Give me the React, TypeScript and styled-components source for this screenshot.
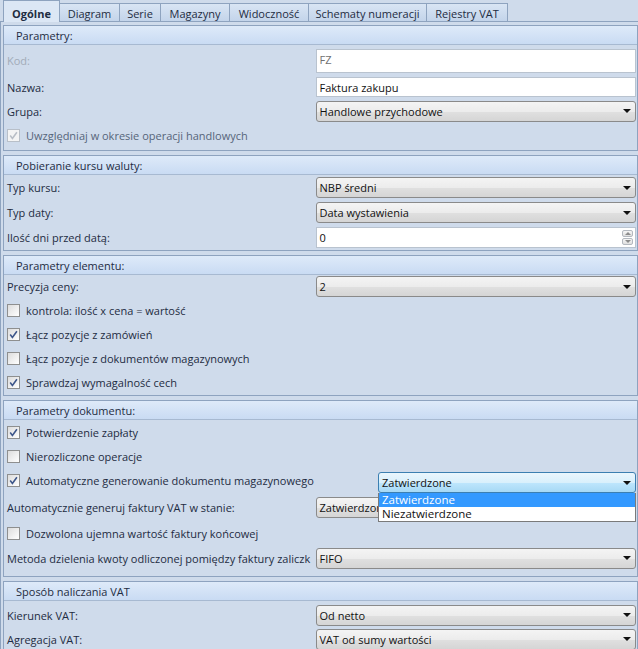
import React from "react";
import styled, { createGlobalStyle, css } from "styled-components";

const GlobalStyle = createGlobalStyle`
  html, body { margin: 0; padding: 0; background: #cfdbeb; }
  body {
    font-family: "Open Sans", "Noto Sans", sans-serif;
    font-size: 11px;
    color: #1e2c42;
  }
  * { box-sizing: border-box; }
`;

const Page = styled.div`
  width: 638px;
  height: 649px;
  overflow: hidden;
  background: #cfdbeb;
`;

const TabStrip = styled.div`
  display: flex;
  align-items: flex-end;
  height: 22px;
  padding-left: 3px;
  border-bottom: 1px solid #8ea3bf;
`;

const Tab = styled.div<{ $active?: boolean; $w: number }>`
  width: ${(p) => p.$w}px;
  height: 18px;
  margin-left: -1px;
  padding-top: 1px;
  border: 1px solid #8ea3bf;
  border-bottom: none;
  display: flex;
  align-items: center;
  justify-content: center;
  white-space: nowrap;
  background: linear-gradient(#d9e5f4, #c3d4ea);
  color: #1e2c42;
  ${(p) =>
    p.$active &&
    css`
      height: 22px;
      margin-bottom: -1px;
      padding-top: 3px;
      margin-left: 0;
      background: #dce7f5;
      font-weight: 700;
      position: relative;
      z-index: 1;
    `}
`;

const Panel = styled.div`
  padding-left: 2px;
  border-left: 1px solid #8ea3bf;
  padding-top: 2px;
`;

const Group = styled.section<{ $pb?: number; $gap?: number }>`
  margin-top: ${(p) => p.$gap ?? 4}px;
  width: 635px;
  border: 1px solid #8ea3bf;
  padding-bottom: ${(p) => p.$pb ?? 0}px;
`;

const GroupHeader = styled.div`
  height: 19px;
  padding-left: 12px;
  display: flex;
  align-items: center;
  border-bottom: 1px solid #a7b9d1;
  background: linear-gradient(#deeaf9, #c9dbf3);
  color: #1e2c42;
`;

const Body = styled.div<{ $pt?: number }>`
  padding-top: ${(p) => p.$pt ?? 0}px;
`;

const Row = styled.div<{ $h?: number }>`
  display: flex;
  align-items: center;
  height: ${(p) => p.$h ?? 24}px;
`;

const Label = styled.div<{ $muted?: boolean }>`
  width: 309px;
  margin-right: 3px;
  padding-left: 3px;
  white-space: nowrap;
  overflow: hidden;
  text-overflow: clip;
  color: ${(p) => (p.$muted ? "#a2abb8" : "#1e2c42")};
`;

const Field = styled.div<{ $w?: number; $end?: boolean }>`
  width: ${(p) => p.$w ?? 321}px;
  margin-left: auto;
  margin-right: 1px;
  align-self: ${(p) => (p.$end ? "flex-end" : "center")};
  position: relative;
`;

const TextBox = styled.div<{ $h?: number; $grey?: boolean }>`
  height: ${(p) => p.$h ?? 20}px;
  background: #fff;
  border: 1px solid #b9c3cf;
  padding: 0 3px;
  display: flex;
  align-items: ${(p) => (p.$h && p.$h > 21 ? "flex-start" : "center")};
  padding-top: ${(p) => (p.$h && p.$h > 21 ? 2 : 0)}px;
  color: ${(p) => (p.$grey ? "#707070" : "#111")};
  position: relative;
`;

const ComboBox = styled.div<{ $focus?: boolean }>`
  height: 21px;
  border: 1px solid #8a8a8a;
  border-radius: 3px;
  padding: 0 3px;
  display: flex;
  align-items: center;
  justify-content: space-between;
  color: #111;
  white-space: nowrap;
  overflow: hidden;
  background: linear-gradient(#f4f4f4 0%, #ececec 50%, #e0e0e0 51%, #d5d5d5 100%);
  ${(p) =>
    p.$focus &&
    css`
      border-color: #3c7fb1;
      background: linear-gradient(#eaf6fd 0%, #d9f0fc 50%, #bee6fd 51%, #a7d9f5 100%);
    `}
`;

const Arrow = styled.span`
  width: 0;
  height: 0;
  margin-right: 1px;
  border-left: 4px solid transparent;
  border-right: 4px solid transparent;
  border-top: 4px solid #111;
  flex-shrink: 0;
`;

const SpinBox = styled.div`
  position: absolute;
  right: 2px;
  top: 2px;
  bottom: 2px;
  width: 11px;
  display: flex;
  flex-direction: column;
  gap: 1px;
`;

const SpinBtn = styled.div<{ $down?: boolean }>`
  flex: 1;
  border: 1px solid #b3b8bf;
  border-radius: 2px;
  background: linear-gradient(#f5f5f5, #dfdfdf);
  display: flex;
  align-items: center;
  justify-content: center;
  &::after {
    content: "";
    border-left: 3px solid transparent;
    border-right: 3px solid transparent;
    ${(p) =>
      p.$down
        ? css`border-top: 3px solid #8b8b8b;`
        : css`border-bottom: 3px solid #8b8b8b;`}
  }
`;

const CheckRow = styled.label`
  display: flex;
  align-items: center;
  gap: 6px;
  padding-left: 3px;
  white-space: nowrap;
`;

const CheckBoxBox = styled.span<{ $disabled?: boolean }>`
  width: 13px;
  height: 13px;
  border: 1px solid ${(p) => (p.$disabled ? "#b8bfc8" : "#8e8f8f")};
  background: ${(p) =>
    p.$disabled ? "#f4f4f4" : "linear-gradient(135deg, #dcdcdc, #ffffff)"};
  display: flex;
  align-items: center;
  justify-content: center;
  flex-shrink: 0;
`;

const CheckText = styled.span<{ $muted?: boolean }>`
  color: ${(p) => (p.$muted ? "#56657a" : "#1e2c42")};
`;

const DropList = styled.div`
  position: absolute;
  top: 100%;
  left: 0;
  right: 0;
  z-index: 5;
  background: #fff;
  border: 1px solid #7a7a7a;
  border-top: none;
`;

const DropItem = styled.div<{ $sel?: boolean }>`
  height: 14px;
  line-height: 14px;
  padding-left: 3px;
  font-size: 11.5px;
  color: ${(p) => (p.$sel ? "#fff" : "#111")};
  background: ${(p) => (p.$sel ? "#3399ff" : "#fff")};
`;

function Check({ checked, disabled, children }: { checked?: boolean; disabled?: boolean; children: React.ReactNode }) {
  return (
    <CheckRow>
      <CheckBoxBox $disabled={disabled}>
        {checked && (
          <svg width="9" height="9" viewBox="0 0 9 9">
            <path
              d="M1.2 4.6 L3.4 7.4 L7.9 1.2"
              fill="none"
              stroke={disabled ? "#b9bec6" : "#3d568a"}
              strokeWidth="1.6"
            />
          </svg>
        )}
      </CheckBoxBox>
      <CheckText $muted={disabled}>{children}</CheckText>
    </CheckRow>
  );
}

function Combo({ value, focus }: { value: string; focus?: boolean }) {
  return (
    <ComboBox $focus={focus}>
      <span>{value}</span>
      <Arrow />
    </ComboBox>
  );
}

const tabs: [string, number][] = [
  ["Ogólne", 57],
  ["Diagram", 61],
  ["Serie", 42],
  ["Magazyny", 70],
  ["Widoczność", 80],
  ["Schematy numeracji", 119],
  ["Rejestry VAT", 82],
];

export default function App() {
  return (
    <Page>
      <GlobalStyle />
      <TabStrip>
        {tabs.map(([t, w], i) => (
          <Tab key={t} $w={w} $active={i === 0}>
            {t}
          </Tab>
        ))}
      </TabStrip>
      <Panel>
        <Group $gap={1} $pb={3}>
          <GroupHeader>Parametry:</GroupHeader>
          <Body $pt={1}>
            <Row $h={29}>
              <Label $muted>Kod:</Label>
              <Field>
                <TextBox $h={24} $grey>FZ</TextBox>
              </Field>
            </Row>
            <Row>
              <Label>Nazwa:</Label>
              <Field>
                <TextBox $h={20}>Faktura zakupu</TextBox>
              </Field>
            </Row>
            <Row>
              <Label>Grupa:</Label>
              <Field>
                <Combo value="Handlowe przychodowe" />
              </Field>
            </Row>
            <Row>
              <Check checked disabled>
                Uwzględniaj w okresie operacji handlowych
              </Check>
            </Row>
          </Body>
        </Group>

        <Group>
          <GroupHeader>Pobieranie kursu waluty:</GroupHeader>
          <Body>
            <Row $h={25}>
              <Label>Typ kursu:</Label>
              <Field>
                <Combo value="NBP średni" />
              </Field>
            </Row>
            <Row $h={25}>
              <Label>Typ daty:</Label>
              <Field>
                <Combo value="Data wystawienia" />
              </Field>
            </Row>
            <Row $h={25}>
              <Label>Ilość dni przed datą:</Label>
              <Field>
                <TextBox $h={21}>
                  0
                  <SpinBox>
                    <SpinBtn />
                    <SpinBtn $down />
                  </SpinBox>
                </TextBox>
              </Field>
            </Row>
          </Body>
        </Group>

        <Group $pb={1}>
          <GroupHeader>Parametry elementu:</GroupHeader>
          <Body>
            <Row $h={23}>
              <Label>Precyzja ceny:</Label>
              <Field>
                <Combo value="2" />
              </Field>
            </Row>
            <Row>
              <Check>kontrola: ilość x cena = wartość</Check>
            </Row>
            <Row>
              <Check checked>Łącz pozycje z zamówień</Check>
            </Row>
            <Row>
              <Check>Łącz pozycje z dokumentów magazynowych</Check>
            </Row>
            <Row>
              <Check checked>Sprawdzaj wymagalność cech</Check>
            </Row>
          </Body>
        </Group>

        <Group $pb={6}>
          <GroupHeader>Parametry dokumentu:</GroupHeader>
          <Body>
            <Row>
              <Check checked>Potwierdzenie zapłaty</Check>
            </Row>
            <Row>
              <Check>Nierozliczone operacje</Check>
            </Row>
            <Row $h={25}>
              <Check checked>Automatyczne generowanie dokumentu magazynowego</Check>
              <Field $w={258} $end>
                <Combo value="Zatwierdzone" focus />
                <DropList>
                  <DropItem $sel>Zatwierdzone</DropItem>
                  <DropItem>Niezatwierdzone</DropItem>
                </DropList>
              </Field>
            </Row>
            <Row $h={28}>
              <Label>Automatycznie generuj faktury VAT w stanie:</Label>
              <Field>
                <Combo value="Zatwierdzone" />
              </Field>
            </Row>
            <Row $h={25}>
              <Check>Dozwolona ujemna wartość faktury końcowej</Check>
            </Row>
            <Row>
              <Label>Metoda dzielenia kwoty odliczonej pomiędzy faktury zaliczk</Label>
              <Field>
                <Combo value="FIFO" />
              </Field>
            </Row>
          </Body>
        </Group>

        <Group>
          <GroupHeader>Sposób naliczania VAT</GroupHeader>
          <Body $pt={2}>
            <Row>
              <Label>Kierunek VAT:</Label>
              <Field>
                <Combo value="Od netto" />
              </Field>
            </Row>
            <Row>
              <Label>Agregacja VAT:</Label>
              <Field>
                <Combo value="VAT od sumy wartości" />
              </Field>
            </Row>
          </Body>
        </Group>
      </Panel>
    </Page>
  );
}
